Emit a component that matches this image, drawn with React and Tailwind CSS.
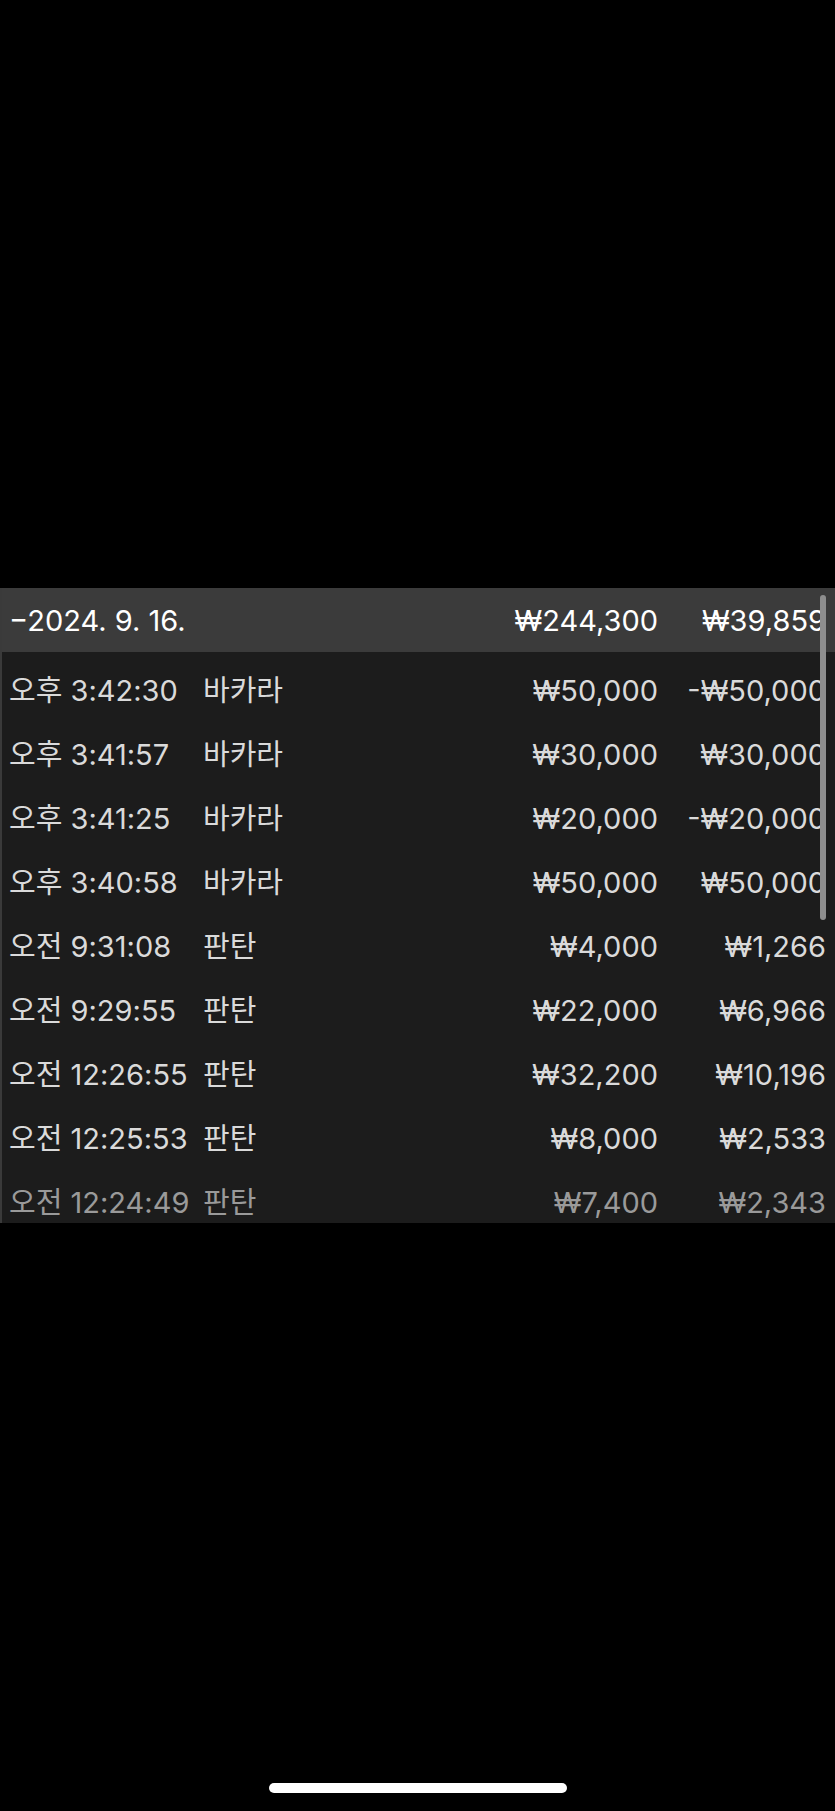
import React from "react";

const rows = [
  ["오후 3:42:30", "바카라", "₩50,000", "-₩50,000"],
  ["오후 3:41:57", "바카라", "₩30,000", "₩30,000"],
  ["오후 3:41:25", "바카라", "₩20,000", "-₩20,000"],
  ["오후 3:40:58", "바카라", "₩50,000", "₩50,000"],
  ["오전 9:31:08", "판탄", "₩4,000", "₩1,266"],
  ["오전 9:29:55", "판탄", "₩22,000", "₩6,966"],
  ["오전 12:26:55", "판탄", "₩32,200", "₩10,196"],
  ["오전 12:25:53", "판탄", "₩8,000", "₩2,533"],
  ["오전 12:24:49", "판탄", "₩7,400", "₩2,343"],
];

const font = { fontFamily: 'Inter, "Noto Sans CJK KR", sans-serif' };

export default function App() {
  return (
    <div className="w-[835px] h-[1811px] bg-black flex flex-col" style={font}>
      <div className="h-[588px] shrink-0" />
      <div className="relative h-[635px] shrink-0 overflow-hidden bg-[#1c1c1c] border-l-2 border-[#3a3a3a]">
        <div className="h-[64px] bg-[#3b3b3b] flex items-center text-white text-[29px] leading-none">
          <div className="w-[201px] pl-[7px] shrink-0 whitespace-nowrap">−2024. 9. 16.</div>
          <div className="flex-1" />
          <div className="w-[200px] text-right shrink-0">₩244,300</div>
          <div className="w-[168px] text-right shrink-0">₩39,859</div>
          <div className="w-[9px] shrink-0" />
        </div>
        <div className="pt-[6px]">
          {rows.map((r, i) => (
            <div
              key={i}
              className={
                "h-[64px] flex items-center text-[29px] leading-none " +
                (i === rows.length - 1 ? "text-[#9a9a9a]" : "text-[#dadada]")
              }
            >
              <div className="w-[201px] pl-[7px] shrink-0 whitespace-nowrap">{r[0]}</div>
              <div className="flex-1 whitespace-nowrap">{r[1]}</div>
              <div className="w-[200px] text-right shrink-0">{r[2]}</div>
              <div className="w-[168px] text-right shrink-0">{r[3]}</div>
              <div className="w-[9px] shrink-0" />
            </div>
          ))}
        </div>
        <div className="absolute right-[9px] top-[7px] w-[6px] h-[325px] rounded-full bg-[#8e8e8e]" />
      </div>
      <div className="flex-1" />
      <div className="flex justify-center pb-[18px]">
        <div className="w-[298px] h-[10px] rounded-full bg-white" />
      </div>
    </div>
  );
}
